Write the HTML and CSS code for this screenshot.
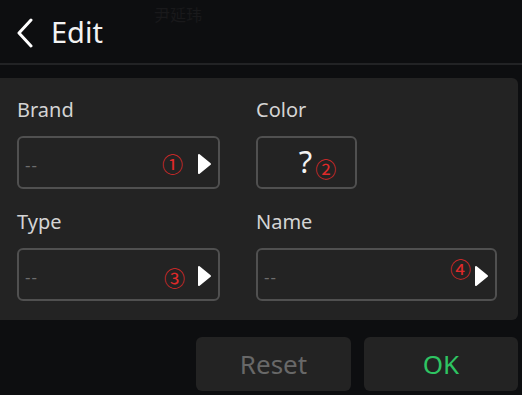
FILE: index.html
```html
<!DOCTYPE html>
<html lang="en">
<head>
    <meta charset="UTF-8">
    <meta name="viewport" content="width=device-width, initial-scale=1.0">
    <title>Edit</title>
    <link rel="stylesheet" href="styles.css">
</head>
<body>
    <div class="header">
        <svg class="back" width="18" height="30" viewBox="0 0 18 30">
            <polyline points="15,2 3,15 15,28" fill="none" stroke="#fff" stroke-width="3" stroke-linecap="round" stroke-linejoin="round"/>
        </svg>
        <span class="title">Edit</span>
        <span class="watermark">尹延玮</span>
    </div>
    <div class="divider"></div>

    <div class="panel">
        <div class="field">
            <label class="field-label">Brand</label>
            <div class="select wide">
                <span class="empty">--</span>
                <span class="num num-1">①</span>
                <svg class="arrow" width="15" height="22" viewBox="0 0 15 22"><path d="M2 2 L13 11 L2 20 Z" fill="#fff" stroke="#fff" stroke-width="2" stroke-linejoin="round"/></svg>
            </div>
        </div>
        <div class="field">
            <label class="field-label">Color</label>
            <div class="select color">
                <span class="question">?</span><span class="num num-2">②</span>
            </div>
        </div>
        <div class="field">
            <label class="field-label">Type</label>
            <div class="select wide">
                <span class="empty">--</span>
                <span class="num num-3">③</span>
                <svg class="arrow" width="15" height="22" viewBox="0 0 15 22"><path d="M2 2 L13 11 L2 20 Z" fill="#fff" stroke="#fff" stroke-width="2" stroke-linejoin="round"/></svg>
            </div>
        </div>
        <div class="field">
            <label class="field-label">Name</label>
            <div class="select wide">
                <span class="empty">--</span>
                <span class="num num-4">④</span>
                <svg class="arrow" width="15" height="22" viewBox="0 0 15 22"><path d="M2 2 L13 11 L2 20 Z" fill="#fff" stroke="#fff" stroke-width="2" stroke-linejoin="round"/></svg>
            </div>
        </div>
    </div>

    <div class="actions">
        <button class="btn btn-reset">Reset</button>
        <button class="btn btn-ok">OK</button>
    </div>
</body>
</html>
```

FILE: styles.css
```css
body {
    margin: 0;
    background-color: #0d0e10;
    font-family: "Noto Sans", "Open Sans", sans-serif;
    color: #fff;
    width: 522px;
    height: 395px;
    overflow: hidden;
}

.header {
    position: relative;
    height: 63px;
    display: flex;
    align-items: center;
    padding-left: 16px;
}

.back {
    margin-top: 2px;
}

.title {
    font-size: 29px;
    margin-left: 17px;
    color: #f2f2f2;
}

.watermark {
    position: absolute;
    left: 154px;
    top: 4px;
    font-family: "Noto Sans CJK SC", sans-serif;
    font-size: 16px;
    line-height: 20px;
    color: #19191b;
}

.divider {
    height: 2px;
    background-color: #222325;
}

.panel {
    margin-top: 13px;
    width: 518px;
    box-sizing: border-box;
    background-color: #232323;
    border-radius: 0 6px 6px 0;
    padding: 18px 0 19px 17px;
    display: grid;
    grid-template-columns: 203px 241px;
    column-gap: 36px;
    row-gap: 19px;
}

.field-label {
    display: block;
    font-size: 20px;
    line-height: 27px;
    color: #d4d4d4;
    margin-bottom: 13px;
}

.select {
    height: 53px;
    box-sizing: border-box;
    border: 2px solid #505050;
    border-radius: 6px;
    display: flex;
    align-items: center;
}

.select.wide {
    padding: 0 6px 0 6px;
}

.empty {
    font-size: 17px;
    color: #6d6d6d;
    flex: 1;
    letter-spacing: 1px;
    margin-top: 4px;
}

.num {
    font-family: "Noto Sans CJK JP", "DejaVu Sans", sans-serif;
    color: #e02a2a;
    font-size: 21px;
    line-height: 24px;
    margin-right: 14px;
}

.num-3 {
    margin-top: 4px;
    margin-right: 12px;
}

.num-4 {
    margin-top: -14px;
    margin-right: 3px;
}

.arrow {
    margin-top: 2px;
}

.select.color {
    width: 101px;
    justify-content: center;
    padding-left: 22px;
}

.question {
    font-size: 31px;
    line-height: 36px;
    color: #f2f2f2;
    margin-top: -4px;
}

.num-2 {
    margin: 10px 0 0 3px;
}

.actions {
    margin-top: 17px;
    display: flex;
    justify-content: flex-end;
    gap: 13px;
    padding-right: 4px;
}

.btn {
    width: 155px;
    height: 54px;
    border: none;
    border-radius: 6px;
    background-color: #232323;
    font-family: "Noto Sans", "Open Sans", sans-serif;
    font-size: 26px;
    padding: 0;
}

.btn-reset {
    color: #686868;
}

.btn-ok {
    width: 154px;
    color: #2ec462;
}
```
